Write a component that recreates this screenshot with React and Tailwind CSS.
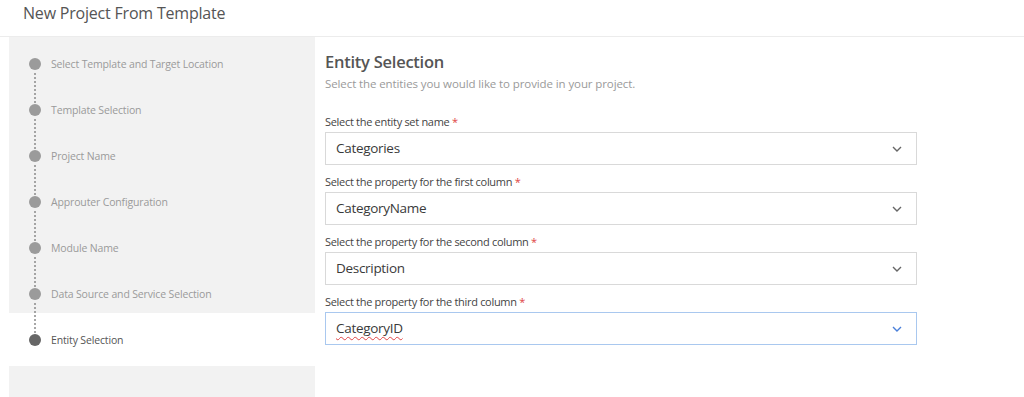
import React from "react";

const steps = [
  "Select Template and Target Location",
  "Template Selection",
  "Project Name",
  "Approuter Configuration",
  "Module Name",
  "Data Source and Service Selection",
];

function Dots() {
  return (
    <div className="flex flex-col items-center gap-[2px] py-[3px]">
      {[0, 1, 2, 3, 4, 5, 6, 7].map((i) => (
        <div key={i} className="w-[2px] h-[2px] rounded-full bg-[#8a8a8a]" />
      ))}
    </div>
  );
}

function Step({ label, last, active }) {
  return (
    <div className="flex h-[46px] items-start">
      <div className="w-[52px] flex flex-col items-center">
        <div
          className={
            "w-[12px] h-[12px] rounded-full " +
            (active ? "bg-[#666666]" : "bg-[#9b9b9b]")
          }
        />
        {!last && <Dots />}
      </div>
      <div
        className={
          "text-[10.5px] tracking-[-0.15px] leading-[13px] -ml-[10px] " +
          (active ? "text-[#555555]" : "text-[#9a9a9a]")
        }
      >
        {label}
      </div>
    </div>
  );
}

function Chevron({ color }) {
  return (
    <svg width="10" height="6" viewBox="0 0 10 6" fill="none">
      <path d="M1 1l4 4 4-4" stroke={color} strokeWidth="1.4" />
    </svg>
  );
}

function Field({ label, value, focused }) {
  return (
    <div className="flex flex-col">
      <div className="text-[11px] tracking-[-0.3px] leading-[14px] text-[#444444] h-[19px] pt-[2px]">
        {label} <span className="text-[#e04545]">*</span>
      </div>
      <div
        className={
          "w-[592px] h-[33px] border flex items-center justify-between pl-[10px] pr-[14px] bg-white " +
          (focused ? "border-[#a9c8ef]" : "border-[#d9d9d9]")
        }
      >
        <span
          className={
            "text-[13.5px] tracking-[-0.3px] text-[#3a3a3a] " +
            (focused
              ? "underline decoration-wavy decoration-[#e04545] decoration-[1px] underline-offset-[3px]"
              : "")
          }
        >
          {value}
        </span>
        <Chevron color={focused ? "#4a7fd9" : "#666666"} />
      </div>
    </div>
  );
}

export default function App() {
  return (
    <div
      className="w-[1024px] h-[397px] bg-white overflow-hidden flex flex-col"
      style={{ fontFamily: '"Open Sans", "Noto Sans", sans-serif' }}
    >
      <div className="h-[37px] border-b border-[#ececec] pl-[23px] pt-[1px]">
        <div className="text-[16px] tracking-[-0.2px] leading-[24px] text-[#555555]">
          New Project From Template
        </div>
      </div>
      <div className="flex flex-1">
        <div className="w-[306px] ml-[9px] flex flex-col">
          <div className="bg-[#f2f2f2] pt-[21px] h-[276px]">
            {steps.map((s) => (
              <Step key={s} label={s} />
            ))}
          </div>
          <div className="h-[53px] pt-[21px]">
            <Step label="Entity Selection" last active />
          </div>
          <div className="bg-[#f2f2f2] flex-1" />
        </div>
        <div className="pl-[10px] pt-[13px] flex flex-col">
          <div className="text-[16.5px] tracking-[-0.25px] font-semibold leading-[24px] text-[#555555]">
            Entity Selection
          </div>
          <div className="text-[11.5px] tracking-[-0.1px] leading-[16px] text-[#9a9a9a] mt-[2px]">
            Select the entities you would like to provide in your project.
          </div>
          <div className="flex flex-col gap-[8px] mt-[21px]">
            <Field label="Select the entity set name" value="Categories" />
            <Field label="Select the property for the first column" value="CategoryName" />
            <Field label="Select the property for the second column" value="Description" />
            <Field label="Select the property for the third column" value="CategoryID" focused />
          </div>
        </div>
      </div>
    </div>
  );
}
